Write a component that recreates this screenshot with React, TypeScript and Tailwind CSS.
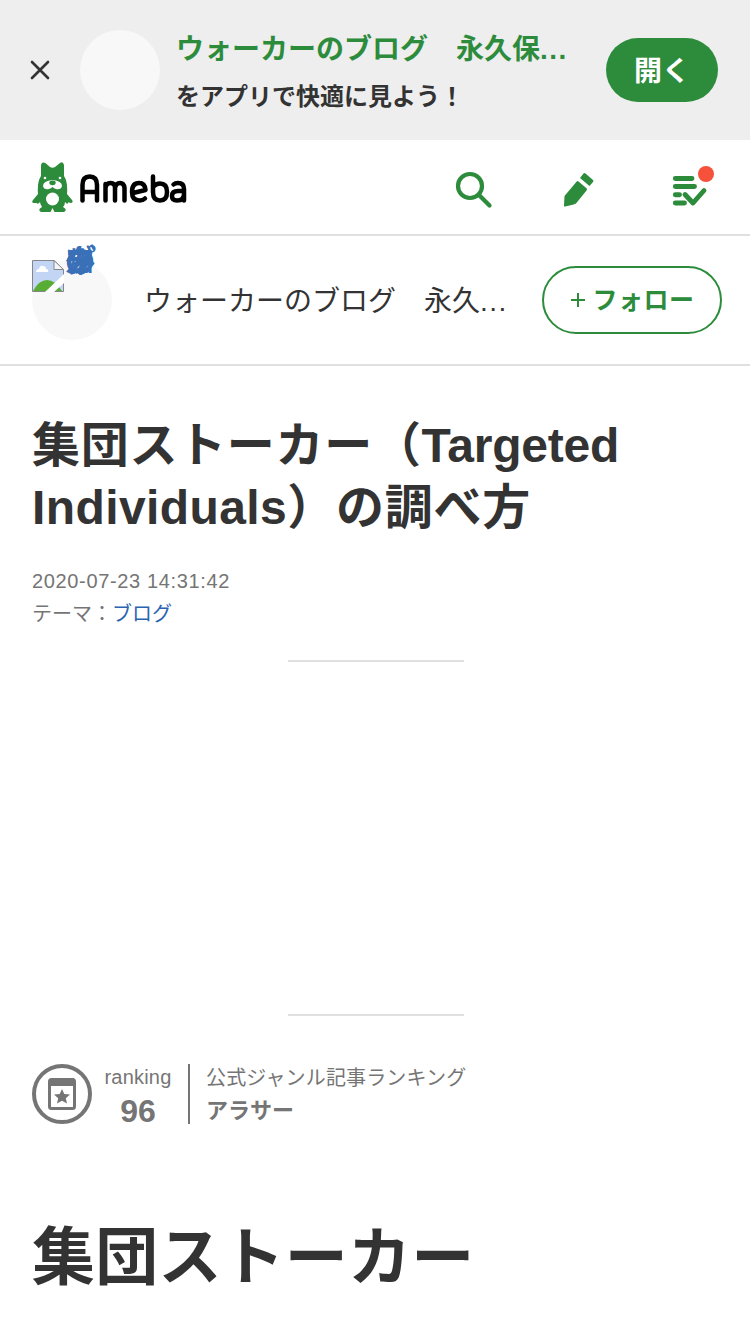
import React from 'react'

/** Green bear mascot standing left of the wordmark. */
const Mascot: React.FC = () => (
  <svg viewBox="0 0 41 50" className="h-[50px] w-[41px] shrink-0" aria-hidden="true">
    <path
      d="M9 3Q10-1 14 1.500L18 5Q20.500 6.500 23 5L28 1Q31-1 32 3V14Q36 20 35 32L40 38Q42 41 38 41L36.500 40Q36 43 34 41L33 40Q33 43 31 45Q36 48 32 50H22.500L20.500 46 18.500 50H9Q5 48 10 45Q8 42 8 40Q6 43 4.500 41L2 41Q-1 41 1 38L6 32Q5 20 9 14Z"
      fill="#2d8c3c"
    />
    <circle cx="20.500" cy="37" r="6.500" fill="#fff" />
    <circle cx="13" cy="16" r="1.300" fill="#fff" />
    <circle cx="28" cy="16" r="1.300" fill="#fff" />
    <path d="M11 24q0-5 9.500-6q9.500 1 9.500 6q-1 4-6 3q-2-.5-3.500-2q-1.500 1.500-3.500 2q-5 1-6-3" fill="#fff" />
    <ellipse cx="20.500" cy="20.800" rx="3.200" ry="2.400" fill="#2d8c3c" />
  </svg>
)

/** Rounded "Ameba" wordmark. */
const Wordmark: React.FC = () => (
  <svg
    viewBox="0 0 108 30"
    className="mt-[3px] ml-[6px] h-[30px] w-[108px] shrink-0"
    fill="none"
    stroke="#000"
    strokeWidth="4.500"
    strokeLinecap="round"
    strokeLinejoin="round"
    role="img"
    aria-label="Ameba"
  >
    <path d="M3.500 26.500V11Q3.500 2.500 10.700 2.500T18 11V26.500M3.500 18H18" />
    <path d="M26.500 26.500V10M26.500 14Q27 9 31.500 9T36 14V26.500M36 14Q37 9 41 9T45.500 14V26.500" />
    <path d="M54 19L66.500 16Q66 9 60 9Q53 9 53 18Q53 26.500 60.500 26.500Q64 26.500 66 24.500" />
    <path d="M74 2.500V18Q74 26.500 81 26.500T88 18Q88 9.500 81 9.500Q77 9.500 74 13" />
    <path d="M94.500 10.500Q96 9 99 9Q105 9 105 15V26.500M105 17H99Q93 17 93 22Q93 26.500 98 26.500Q105 26.500 105 20" />
  </svg>
)

const SearchIcon: React.FC = () => (
  <svg viewBox="0 0 38 38" className="size-[38px]" fill="none" stroke="#2d8c3c" strokeWidth="4.200" strokeLinecap="round">
    <circle cx="15" cy="15" r="12" />
    <path d="M24 24L34.500 34.500" />
  </svg>
)

const PencilIcon: React.FC = () => (
  <svg viewBox="0 0 32 36" className="h-9 w-8" fill="#2d8c3c">
    <path d="M13.700 9.500Q14.500 8.500 15.500 9.500L23.500 16.300Q24.500 17.300 23.700 18.300L13 31.500Q12 32.500 2 34.500Q1 35 1 33.500L1.500 24Z" />
    <path d="M20.500 1.500Q21.500.5 22.500 1.500L30 8Q31 9 30 10L26.500 14 17 6Z" />
  </svg>
)

const ChecklistIcon: React.FC = () => (
  <svg viewBox="0 0 44 42" className="h-[42px] w-11" fill="none" stroke="#2d8c3c" strokeWidth="4.900" strokeLinecap="round">
    <path d="M5.300 13.500H22M5.300 21.500H24.500M5.300 29.800H9.500M5.300 38H14.500" />
    <path d="M15 29.500L23 38L34 25.500" strokeLinejoin="round" />
    <circle cx="36" cy="9" r="11.500" fill="#fff" stroke="none" />
    <circle cx="36" cy="9" r="8" fill="#f5513b" stroke="none" />
  </svg>
)

const BrokenImageIcon: React.FC = () => (
  <svg viewBox="0 0 32 32" className="absolute left-0 top-0 size-8">
    <path d="M.5.5H22L31.500 9.500V31.500H.5Z" fill="#c3d5f5" stroke="#868686" />
    <path d="M4 12q0-3 3-3q1-4 4-3q3 0 3 3q3 0 2 3Z" fill="#fff" />
    <path d="M1 31Q7 20 15 20T30 31Z" fill="#58ad35" />
    <path d="M13 32L32 14V23L22 32Z" fill="#fff" />
    <path d="M22 .5V9.500H31.500Z" fill="#f4f6fa" stroke="#868686" />
  </svg>
)

const RankingIcon: React.FC = () => (
  <svg viewBox="0 0 60 60" className="size-[60px] shrink-0">
    <circle cx="30" cy="30" r="28" fill="none" stroke="#757575" strokeWidth="4" />
    <rect x="17.500" y="15.500" width="25" height="29" rx="2" fill="none" stroke="#757575" strokeWidth="3" />
    <path d="M17 15H43V22H17Z" fill="#757575" />
    <path d="M30 25L32.300 30 38 30.500 33.800 34.200 35 39.500 30 36.700 25 39.500 26.200 34.200 22 30.500 27.700 30Z" fill="#757575" />
  </svg>
)

/** Prompt to open the blog in the app. */
const AppBanner: React.FC = () => (
  <aside className="flex h-[140px] items-center bg-[#eee] pl-[30px] pr-8">
    <button aria-label="閉じる" className="mr-[30px] size-5 shrink-0">
      <svg viewBox="0 0 20 20" fill="none" stroke="#333" strokeWidth="2.600" strokeLinecap="round">
        <path d="M2 2L18 18M18 2L2 18" />
      </svg>
    </button>
    <div className="size-20 shrink-0 rounded-full bg-[#f8f8f8]" />
    <div className="ml-4 w-[414px] whitespace-nowrap pt-[5px] font-bold">
      <p className="text-[28px] leading-[48px] text-[#2d8c3c]">
        ウォーカーのブログ　永久保<span className="tracking-[1.500px]">...</span>
      </p>
      <p className="text-2xl leading-[46px]">をアプリで快適に見よう！</p>
    </div>
    <button className="ml-auto h-16 w-28 shrink-0 rounded-full bg-[#2d8c3c] pt-1 text-[28px] font-bold text-white">
      開く
    </button>
  </aside>
)

const SiteHeader: React.FC = () => (
  <header className="flex h-24 items-center border-b-2 border-[#e0e0e0] px-8">
    <a className="flex items-center">
      <Mascot />
      <Wordmark />
    </a>
    <nav className="ml-auto flex items-center pt-[5px]">
      <SearchIcon />
      <div className="ml-[70px]">
        <PencilIcon />
      </div>
      <div className="-mt-[7px] ml-[75px] mr-[4px]">
        <ChecklistIcon />
      </div>
    </nav>
  </header>
)

// Every character of the alt text lands on the same spot
const altChars = ['ウ', 'ォ', 'ー', 'カ', 'の', 'ブ', 'ロ', 'グ', 'ィ', 'ル', 'プ']

const BlogBar: React.FC = () => (
  <section className="flex h-[130px] items-center border-b-2 border-[#e0e0e0] pl-8 pr-7">
    <div className="relative size-20 shrink-0 rounded-full bg-[#f8f8f8]">
      <BrokenImageIcon />
      <span className="absolute -top-[19px] left-8 grid text-[32px] leading-[40px] text-[#3970b8]">
        {altChars.map((char) => (
          <span key={char} className="col-start-1 row-start-1">
            {char}
          </span>
        ))}
      </span>
    </div>
    <p className="ml-8 whitespace-nowrap pt-[3px] text-[28px]">
      ウォーカーのブログ　永久<span className="tracking-[1.500px]">...</span>
    </p>
    <button className="ml-auto flex h-[68px] w-[180px] shrink-0 items-center justify-center gap-[7px] rounded-full border-2 border-[#2d8c3c] pl-[2px] text-[25px] font-bold text-[#2d8c3c]">
      <svg viewBox="0 0 14 14" className="size-[14px]" stroke="#2d8c3c" strokeWidth="2">
        <path d="M0 7H14M7 0V14" />
      </svg>
      <span className="pt-px tracking-[0.500px]">フォロー</span>
    </button>
  </section>
)

const Article: React.FC = () => (
  <article className="px-8 pt-[49px]">
    <h1 className="whitespace-nowrap text-5xl font-bold leading-[62px]">
      <span className="tracking-[0.700px]">集団ストーカー（</span>
      <span className="tracking-[-0.200px]">Targeted</span>
      <br />
      <span className="tracking-[0.400px]">Individuals</span>
      <span className="tracking-[0.800px]">）の調べ方</span>
    </h1>
    <div className="mt-[26px] text-xl leading-8 text-[#757575]">
      <time className="block tracking-[0.650px]">2020-07-23 14:31:42</time>
      <p className="relative top-px">
        テーマ：<a className="text-[#2a64b0]">ブログ</a>
      </p>
    </div>
    {/* ad slot */}
    <div className="ml-64 mt-[31px] h-[356px] w-44 border-y-2 border-[#e0e0e0]" />
    <div className="mt-12 flex h-[60px] text-[#757575]">
      <RankingIcon />
      <div className="ml-3 w-[68px] text-center">
        <p className="text-xl leading-[26px] tracking-[0.200px]">ranking</p>
        <p className="text-[32px] font-bold leading-[42px]">96</p>
      </div>
      <div className="ml-4 whitespace-nowrap border-l-2 border-[#757575] pl-4">
        <p className="pt-px text-xl leading-[26px] tracking-[0.150px]">公式ジャンル記事ランキング</p>
        <p className="text-[22px] font-bold leading-[40px]">アラサー</p>
      </div>
    </div>
    <h2 className="mt-[85px] whitespace-nowrap text-[63px] font-bold leading-[96px] tracking-[0.200px]">集団ストーカー</h2>
  </article>
)

const App: React.FC = () => (
  <main className="h-[1334px] w-[750px] overflow-hidden bg-white font-['Liberation_Sans','Noto_Sans_CJK_JP',sans-serif] text-[#333]">
    <AppBanner />
    <SiteHeader />
    <BlogBar />
    <Article />
  </main>
)

export default App
